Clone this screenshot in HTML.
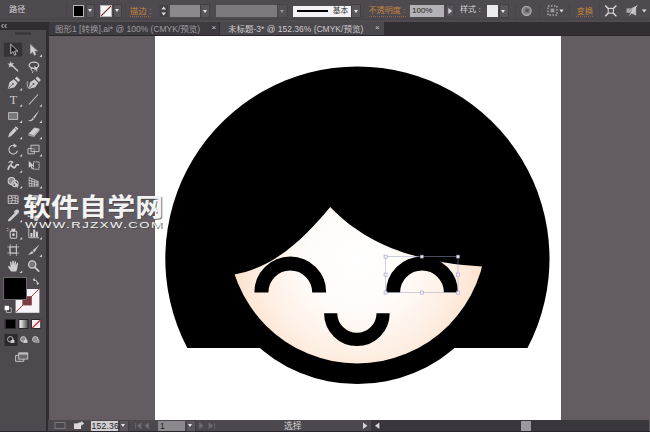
<!DOCTYPE html>
<html lang="zh"><head><meta charset="utf-8"><title>Illustrator</title>
<style>
html,body{margin:0;padding:0;background:#635d63;}
body{width:650px;height:432px;overflow:hidden;position:relative;font-family:"Liberation Sans","Noto Sans CJK SC",sans-serif;font-size:9px;line-height:1;color:#d6d4d8;}
.abs{position:absolute;}
#ctrl{left:0;top:0;width:650px;height:22px;background:#4e4a4f;}
#ctrlline{left:0;top:18px;width:650px;height:4px;background:linear-gradient(#4e4a4f,#47434a 40%,#555056 75%,#4a464c);}
#tabs{left:0;top:22px;width:650px;height:14px;background:#322e33;}
#tools{left:0;top:30px;width:47px;height:402px;background:#4e494e;}
#toolsborder{left:46.4px;top:22px;width:2.3px;height:410px;background:#302c32;}
#artboard{left:155px;top:36px;width:406px;height:384px;background:#fff;}
#status{left:48px;top:420px;width:601px;height:12px;background:#39373b;}
#statusl{left:48px;top:420px;width:323px;height:11px;background:#4c484d;}
#statusb{left:0;top:431px;width:650px;height:1px;background:#2a242e;}
.t{position:absolute;white-space:nowrap;}
.or{color:#c5853f;margin-top:1.8px;border-bottom:1px dotted rgba(197,133,63,.5);padding-bottom:0.3px;}
.box{position:absolute;box-sizing:border-box;}
.dd{position:absolute;background:#5a565c;box-shadow:0 0 0 0.6px #3c383e;}
.dd:after{content:"";position:absolute;left:50%;top:50%;margin:-1.5px 0 0 -2.5px;border:2.5px solid transparent;border-top:3px solid #e8e6ea;border-bottom:none;}
#wm1{left:23px;top:195.2px;font-size:27.5px;font-weight:700;color:#f3f3f3;transform-origin:0 0;transform:scale(1.02,0.9);text-shadow:1px 1px 0.5px rgba(70,70,70,.75);}
#wm2{left:25px;top:219.8px;font-size:9.8px;color:#f3f3f3;letter-spacing:1.1px;transform-origin:0 0;transform:scale(1.345,1);text-shadow:1px 1px 0.5px rgba(70,70,70,.75);}
</style></head>
<body>
<div class="abs" id="artboard"></div>
<svg class="abs" style="left:0;top:0" width="650" height="432" viewBox="0 0 650 432">
<defs><radialGradient id="skin" gradientUnits="userSpaceOnUse" cx="357" cy="260" r="132"><stop offset="0" stop-color="#ffffff"/><stop offset="0.4" stop-color="#fffbf8"/><stop offset="0.72" stop-color="#feefe4"/><stop offset="1" stop-color="#fcdfc9"/></radialGradient></defs>
<path d="M187.3 347.9 A192.1 192.1 0 1 1 527.5 347.9 Z" fill="#000"/>
<circle cx="357.2" cy="234.5" r="149.6" fill="#000"/>
<clipPath id="bang"><path d="M224.4 276 L234.3 274.4 C274.25 268.1 305.53 236.68 330.2 206.9 C369.89 248.58 426.03 263.43 482.1 266.5 L492.1 267.05 L492.1 400 L224.4 400 Z"/></clipPath>
<circle cx="357.2" cy="234.5" r="128.9" fill="url(#skin)" clip-path="url(#bang)"/>
<path d="M261.40000000000003 292.4 A28.9 28.9 0 0 1 319.2 292.4" fill="none" stroke="#000" stroke-width="14"/>
<path d="M393.1 292.4 A28.9 28.9 0 0 1 450.9 292.4" fill="none" stroke="#000" stroke-width="14"/>
<path d="M330.7 313.2 A26.2 26.2 0 0 0 383.09999999999997 313.2" fill="none" stroke="#000" stroke-width="13.2"/>
<rect x="385.6" y="256.6" width="72.39999999999998" height="36.0" fill="none" stroke="#9a9ec8" stroke-width="0.6" opacity="0.8"/>
<rect x="384.1" y="255.1" width="3" height="3" fill="#fff" stroke="#8d92c4" stroke-width="0.6" opacity="0.9"/>
<rect x="384.1" y="273.1" width="3" height="3" fill="#fff" stroke="#8d92c4" stroke-width="0.6" opacity="0.9"/>
<rect x="384.1" y="291.1" width="3" height="3" fill="#fff" stroke="#8d92c4" stroke-width="0.6" opacity="0.9"/>
<rect x="420.3" y="255.1" width="3" height="3" fill="#fff" stroke="#8d92c4" stroke-width="0.6" opacity="0.9"/>
<rect x="420.3" y="291.1" width="3" height="3" fill="#fff" stroke="#8d92c4" stroke-width="0.6" opacity="0.9"/>
<rect x="456.5" y="255.1" width="3" height="3" fill="#fff" stroke="#8d92c4" stroke-width="0.6" opacity="0.9"/>
<rect x="456.5" y="273.1" width="3" height="3" fill="#fff" stroke="#8d92c4" stroke-width="0.6" opacity="0.9"/>
<rect x="456.5" y="291.1" width="3" height="3" fill="#fff" stroke="#8d92c4" stroke-width="0.6" opacity="0.9"/>
</svg>
<div class="abs" id="ctrl"></div><div class="abs" id="ctrlline"></div><div class="abs" id="tabs"></div>
<div class="abs" id="tools"></div><div class="abs" id="toolsborder"></div>
<div class="abs" id="status"></div><div class="abs" id="statusl"></div><div class="abs" id="statusb"></div>
<div class="t " style="left:9.2px;top:6.4px;font-size:8px;">路径</div>
<div class="box" style="left:72.5px;top:5px;width:11.5px;height:11.5px;background:#000;border:1px solid #b8b6ba;"></div>
<div class="dd" style="left:86.5px;top:5px;width:7px;height:11.5px;"></div>
<div class="box" style="left:100px;top:5px;width:11.5px;height:11.5px;background:linear-gradient(135deg,#fbf6f6 0,#fbf6f6 44%,#7d3434 47%,#7d3434 53%,#fbf6f6 56%,#fbf6f6 100%);border:1px solid #b8b6ba;"></div>
<div class="dd" style="left:113.5px;top:5px;width:7px;height:11.5px;"></div>
<div class="t or" style="left:129.8px;top:5.5px;font-size:8.4px;">描边<span style="margin:0 0 0 2.4px">:</span></div>
<div class="box" style="left:169.5px;top:5px;width:30.5px;height:12px;background:#8b898d;"></div>
<div class="dd" style="left:201px;top:5px;width:8px;height:12px;"></div>
<div class="box" style="left:215.5px;top:5px;width:61.5px;height:12px;background:#7c7a7e;"></div>
<div class="dd" style="left:278px;top:5px;width:8.5px;height:12px;opacity:.5"></div>
<div class="box" style="left:293px;top:5.5px;width:57.5px;height:11px;background:#f4f2f6;"></div>
<div class="box" style="left:296.5px;top:10.3px;width:31px;height:1.6px;background:#000;"></div>
<div class="t " style="left:332.8px;top:7px;color:#3a3a3a;font-size:7.8px;">基本</div>
<div class="dd" style="left:352px;top:5px;width:8px;height:12px;"></div>
<div class="t or" style="left:368.5px;top:5.5px;font-size:8.1px;">不透明度<span style="margin:0 0 0 2.4px">:</span></div>
<div class="box" style="left:410px;top:5px;width:34px;height:12px;background:#b4b2b6;"></div>
<div class="t " style="left:412px;top:6.5px;color:#222;font-size:8px;">100%</div>
<div class="t " style="left:460px;top:6px;font-size:8.1px;">样式<span style="margin:0 0 0 2.4px">:</span></div>
<div class="box" style="left:487px;top:5px;width:11px;height:12px;background:#eceaee;"></div>
<div class="dd" style="left:499.5px;top:5px;width:8.5px;height:12px;"></div>
<div class="t or" style="left:576.4px;top:5.5px;font-size:8.4px;">变换</div>
<div class="box" style="left:48.5px;top:22px;width:170.5px;height:13.5px;background:#3e3b40;"></div>
<div class="t " style="left:55px;top:24.5px;color:#9e9ca0;font-size:8.5px;">图形1 [转换].ai* @ 100% (CMYK/预览)</div>
<div class="t " style="left:211.5px;top:24px;color:#d0ced2;font-size:8px;">×</div>
<div class="box" style="left:220px;top:22px;width:164px;height:14px;background:#4a484c;"></div>
<div class="t " style="left:228px;top:24.5px;color:#cccace;font-size:8.5px;">未标题-3* @ 152.36% (CMYK/预览)</div>
<div class="t " style="left:375px;top:24px;color:#d0ced2;font-size:8px;">×</div>
<div class="box" style="left:0px;top:22px;width:46.4px;height:8px;background:#302c32;"></div>
<div class="box" style="left:48.7px;top:35px;width:601.3px;height:1px;background:#29252b;"></div>
<div class="box" style="left:90.5px;top:421px;width:27.5px;height:9.5px;background:#cfcdd1;"></div>
<div class="t " style="left:91.5px;top:422px;color:#222;font-size:8.5px;letter-spacing:0.25px;">152.36</div>
<div class="dd" style="left:119.5px;top:421px;width:8.5px;height:9.5px;"></div>
<div class="box" style="left:158px;top:421px;width:27px;height:9.5px;background:#8b898d;"></div>
<div class="t " style="left:160px;top:422px;color:#222;font-size:8.5px;">1</div>
<div class="dd" style="left:187px;top:421px;width:7.5px;height:9.5px;"></div>
<div class="t " style="left:284px;top:421.5px;font-size:8.8px;">选择</div>
<div class="box" style="left:521px;top:421px;width:9.5px;height:10px;background:#9c9a9e;"></div>
<svg class="abs" style="left:0;top:0" width="650" height="22" viewBox="0 0 650 22" fill="none">
<rect x="159.5" y="5" width="8.5" height="12" fill="#444046"/><path d="M161.3 9.4 l2.4 -2.8 l2.4 2.8 z M161.3 12.6 l2.4 2.8 l2.4 -2.8 z" fill="#dad8dc"/>
<rect x="446" y="5" width="8" height="12" fill="#58545a" stroke="#3c383e" stroke-width=".6"/><path d="M448.4 8 l3.6 3 l-3.6 3 z" fill="#dad8dc"/>
<circle cx="526.6" cy="10.8" r="4.6" fill="#848286" stroke="#b4b2b6" stroke-width="1.1"/><circle cx="527.2" cy="10.4" r="1.9" fill="#59555b"/>
<rect x="548" y="6" width="9" height="9" stroke="#dad8dc" stroke-width="1" stroke-dasharray="1.5 1.5"/><rect x="550.6" y="8.6" width="3.8" height="3.8" fill="#9a989c"/><path d="M559.3 9.6 h4.4 l-2.2 2.8 z" fill="#dad8dc"/>
<rect x="608.2" y="8.4" width="5.2" height="4.8" stroke="#dad8dc" stroke-width="1.1"/><path d="M605.2 5.4 l3 3 M616.4 5.4 l-3 3 M605.2 16.2 l3 -3 M616.4 16.2 l-3 -3" stroke="#dad8dc" stroke-width="1.4"/>
<rect x="626.5" y="8.4" width="5" height="4.4" fill="#a8a6aa"/><path d="M631.5 8 l4.6 -2 v9.4 l-4.6 -2 z" fill="#bdbbbf"/><path d="M629.5 15.4 l7.6 -10" stroke="#dad8dc" stroke-width="1"/><path d="M641.8 9.6 h4.8 l-2.4 3 z" fill="#dad8dc"/>
<path d="M66.5 3 v15" stroke="#423e44" stroke-width="1" opacity=".45"/>
<path d="M125.5 3 v15" stroke="#423e44" stroke-width="1" opacity=".45"/>
<path d="M363.5 3 v15" stroke="#423e44" stroke-width="1" opacity=".45"/>
<path d="M515.5 3 v15" stroke="#423e44" stroke-width="1" opacity=".45"/>
<path d="M539.5 3 v15" stroke="#423e44" stroke-width="1" opacity=".45"/>
<path d="M569.5 3 v15" stroke="#423e44" stroke-width="1" opacity=".45"/>
<path d="M599.5 3 v15" stroke="#423e44" stroke-width="1" opacity=".45"/>
</svg>
<svg class="abs" style="left:0;top:418px" width="650" height="14" viewBox="0 418 650 14" fill="none">
<rect x="55" y="422.5" width="10" height="6" stroke="#7a787c" stroke-width="1"/>
<rect x="74" y="423.4" width="7" height="5.6" fill="#dad8dc"/><path d="M77 424 q2 -2.4 4.4 -1.6 v-1.6 l2.6 2.6 l-2.6 2.6 v-1.6 q-1.6 -.6 -3 .8" fill="#dad8dc"/>
<path d="M135.5 423 v5.6 M141 423 l-3.6 2.8 l3.6 2.8 z M148.6 423 l-3.6 2.8 l3.6 2.8 z" fill="#6f6b71" stroke="#6f6b71" stroke-width=".8"/>
<path d="M199.6 423 l3.6 2.8 l-3.6 2.8 z M209 423 l3.6 2.8 l-3.6 2.8 z M214.6 423 v5.6" fill="#6f6b71" stroke="#6f6b71" stroke-width=".8"/>
<path d="M363 422.6 l4.4 3.2 l-4.4 3.2 z" fill="#dad8dc"/><path d="M379.4 422.6 l-4.4 3.2 l4.4 3.2 z" fill="#dad8dc"/>
</svg>
<svg class="abs" style="left:0;top:0" width="50" height="432" viewBox="0 0 50 432" fill="none" stroke-linecap="round" stroke-linejoin="round">
<path d="M3.2 24.3 l-1.6 1.7 l1.6 1.7 M6.2 24.3 l-1.6 1.7 l1.6 1.7" stroke="#cfcdd1" stroke-width="1"/>
<rect x="15" y="32.5" width="16" height="2" fill="#353337"/>
<rect x="3.8" y="42.6" width="18.4" height="14" fill="#353337"/>
<g transform="translate(13.3,49.8) scale(0.86)" ><path d="M-3 -6 L-3 4.5 L-0.4 2.2 L1.4 6.3 L3.2 5.5 L1.4 1.5 L4.8 1.5 Z" fill="#1c1a1e" stroke="#cfcdd1" stroke-width="1"/></g>
<g transform="translate(33.5,49.8) scale(0.86)" ><path d="M-3.5 -6 L-3.5 4.5 L-0.9 2.2 L0.9 6.3 L2.7 5.5 L0.9 1.5 L4.3 1.5 Z" fill="#cfcdd1" stroke="#cfcdd1" stroke-width=".5"/></g>
<path d="M42.0 54.300000000000004 v2.6 h-2.6 z" fill="#cfcdd1"/>
<g transform="translate(13.3,66.5) scale(0.86)" ><path d="M-3 -6.5 L-2 -3.6 L1 -4 L-1.2 -1.8 L0 1 L-2.8 -0.4 L-5.2 1.4 L-4.6 -1.6 L-7 -3.2 L-4 -3.6 Z" fill="#cfcdd1"/><path d="M-1 -1 L5 5" stroke="#cfcdd1" stroke-width="1.6"/></g>
<g transform="translate(33.5,66.5) scale(0.86)" ><ellipse cx="0.5" cy="-1.5" rx="5.5" ry="3.6" stroke="#cfcdd1" stroke-width="1.5"/><path d="M-2 1.5 q-2 1.5 0 3 q2 1 1 2.5" stroke="#cfcdd1" stroke-width="1.1"/><path d="M1 -1 L1 5 L2.6 3.6 L3.6 6 L4.6 5.5 L3.6 3.2 L5.6 3.2 Z" fill="#cfcdd1"/></g>
<g transform="translate(13.3,83.5) scale(0.86)" ><path d="M-6.4 6.4 L-4.4 -1.4 L0.6 -5 L5 -0.6 L1.4 4.4 Z" fill="#cfcdd1"/><path d="M1.8 -5.8 L4 -8 L8 -4 L5.8 -1.8 Z" fill="#cfcdd1"/><path d="M-5.6 5.6 L-1 1" stroke="#4e494e" stroke-width=".9"/><circle cx="-0.4" cy="0.4" r="1.1" fill="#4e494e"/></g>
<path d="M22.1 88.0 v2.6 h-2.6 z" fill="#cfcdd1"/>
<g transform="translate(34.0,83.5) scale(0.86)" ><path d="M-6.4 6.4 L-4.4 -1.4 L0.6 -5 L5 -0.6 L1.4 4.4 Z" fill="#cfcdd1"/><path d="M1.8 -5.8 L4 -8 L8 -4 L5.8 -1.8 Z" fill="#cfcdd1"/><path d="M-5.6 5.6 L-1 1" stroke="#4e494e" stroke-width=".9"/><circle cx="-0.4" cy="0.4" r="1.1" fill="#4e494e"/><path d="M-7.5 -2 q-1.5 5 1.5 7.5" stroke="#cfcdd1" stroke-width="1"/></g>
<g transform="translate(13.3,99.5) scale(0.86)" ><text x="0" y="5" font-family="Liberation Serif,serif" font-size="14" fill="#cfcdd1" stroke="none" text-anchor="middle">T</text></g>
<path d="M22.1 104.2 v2.6 h-2.6 z" fill="#cfcdd1"/>
<g transform="translate(33.5,99.5) scale(0.86)" ><path d="M-5 5.5 L5 -5.5" stroke="#cfcdd1" stroke-width="1.2"/></g>
<path d="M42.0 104.2 v2.6 h-2.6 z" fill="#cfcdd1"/>
<g transform="translate(13.3,116) scale(0.86)" ><rect x="-5" y="-4" width="10" height="8" fill="#78767a" stroke="#cfcdd1" stroke-width="1"/></g>
<path d="M22.1 120.3 v2.6 h-2.6 z" fill="#cfcdd1"/>
<g transform="translate(33.5,116) scale(0.86)" ><path d="M7 -7 L-0.5 1.5 L1.2 3 Z" fill="#cfcdd1"/><path d="M-1.2 2 q-1 3.5 -5.5 3.2 q4.5 2.2 7.4 -1.6 Z" fill="#cfcdd1"/></g>
<path d="M42.0 120.3 v2.6 h-2.6 z" fill="#cfcdd1"/>
<g transform="translate(13.3,131.8) scale(0.86)" ><path d="M3 -6.5 L6 -3.5 L-2.5 5 L-6 6.5 L-4.8 2.4 Z" fill="#cfcdd1"/><path d="M1.6 -4.6 L4.2 -2" stroke="#4a484c" stroke-width=".8"/></g>
<path d="M22.1 136.7 v2.6 h-2.6 z" fill="#cfcdd1"/>
<g transform="translate(33.5,131.8) scale(0.86)" ><path d="M1 -5 L7 -3.5 L0.5 4 L-6 2.6 Z" fill="#cfcdd1"/><path d="M-6 2.6 L0.5 4 L0.5 6 L-6 4.6 Z" fill="#9c9a9e"/><path d="M0.5 4 L7 -3.5 L7 -1.6 L0.5 6 Z" fill="#bab8bc"/></g>
<path d="M42.0 136.7 v2.6 h-2.6 z" fill="#cfcdd1"/>
<g transform="translate(13.3,149.5) scale(0.86)" ><path d="M4.6 2 A5 5 0 1 1 2 -4.4" stroke="#cfcdd1" stroke-width="1.3" stroke-dasharray="3 1.2"/><path d="M0.5 -7 L4.5 -4.2 L0.5 -2 Z" fill="#cfcdd1"/></g>
<path d="M22.1 154.0 v2.6 h-2.6 z" fill="#cfcdd1"/>
<g transform="translate(33.5,149.5) scale(0.86)" ><rect x="-6" y="-1" width="7" height="6" stroke="#cfcdd1" stroke-width="1"/><rect x="-2.5" y="-5" width="9" height="7.5" stroke="#cfcdd1" stroke-width="1" fill="#66646888"/></g>
<path d="M42.0 154.0 v2.6 h-2.6 z" fill="#cfcdd1"/>
<g transform="translate(13.3,165.8) scale(0.86)" ><path d="M-6 4 q2 -7 5 -3 q2.5 3 4 -1 q1 -2 3 -1" stroke="#cfcdd1" stroke-width="2"/><path d="M-5 -4 q2.5 -2.5 4.5 0 q-3.6 1.2 -1.6 3.4" stroke="#cfcdd1" stroke-width="1.3"/></g>
<path d="M22.1 170.2 v2.6 h-2.6 z" fill="#cfcdd1"/>
<g transform="translate(33.5,165.8) scale(0.86)" ><path d="M-5.5 -6 L-5.5 2.5 L-3.4 0.6 L-2 4 L-0.6 3.4 L-2 0.2 L0.6 0.2 Z" fill="#cfcdd1"/><rect x="0" y="-4.5" width="6.5" height="8.5" stroke="#cfcdd1" stroke-width="1" stroke-dasharray="1.6 1.4"/></g>
<g transform="translate(13.3,181.8) scale(0.86)" ><circle cx="-2" cy="-1" r="4" stroke="#cfcdd1" stroke-width="1.2" fill="#8a888c"/><circle cx="2" cy="2" r="3.6" stroke="#cfcdd1" stroke-width="1.2"/><path d="M2 0 L2 6 L3.6 4.6 L4.6 7 L5.6 6.5 L4.6 4.2 L6.6 4.2 Z" fill="#cfcdd1"/></g>
<path d="M22.1 186.0 v2.6 h-2.6 z" fill="#cfcdd1"/>
<g transform="translate(33.5,181.8) scale(0.86)" ><path d="M-5 -5 L-5 5 M-2 -3.5 L-2 5 M1 -2 L1 5 M-5 -5 L6 0 M-5 -1.6 L6 1.6 M-5 1.8 L6 3.4 M-5 5 L6 5 M4 -0.8 L4 5" stroke="#cfcdd1" stroke-width=".9"/></g>
<path d="M42.0 186.0 v2.6 h-2.6 z" fill="#cfcdd1"/>
<g transform="translate(13.3,199.6) scale(0.86)" ><rect x="-5.5" y="-4.5" width="11" height="9" stroke="#cfcdd1" stroke-width="1"/><path d="M-5.5 -1 q5 -2.5 11 0 M-5.5 2 q5 -2.5 11 0 M-2 -4.5 q2 4.5 0 9 M2 -4.5 q2 4.5 0 9" stroke="#cfcdd1" stroke-width=".9"/></g>
<g transform="translate(33.5,199.6) scale(0.86)" ><rect x="-5.5" y="-4.5" width="11" height="9" stroke="#cfcdd1" stroke-width="1" fill="#8a888c"/></g>
<g transform="translate(13.3,215.6) scale(0.86)" ><path d="M3.2 -6.8 q2.2 -0.6 3.2 1 q1 1.6 -0.6 3 L4 -1 L-3.6 6.4 L-6.4 7 L-5.6 4.2 L1.8 -3.2 L0.4 -4.6 Z" fill="#cfcdd1"/></g>
<path d="M22.1 219.7 v2.6 h-2.6 z" fill="#cfcdd1"/>
<g transform="translate(33.5,215.6) scale(0.86)" ><rect x="-6" y="-5" width="6" height="6" stroke="#cfcdd1" stroke-width="1"/><circle cx="3" cy="3" r="3.2" fill="#cfcdd1"/></g>
<g transform="translate(13.3,233) scale(0.86)" ><rect x="-3.6" y="-2" width="7.6" height="8" rx="1" stroke="#cfcdd1" stroke-width="1.2"/><rect x="-2.2" y="-5" width="4.6" height="3" fill="#cfcdd1"/><circle cx="0.2" cy="2" r="1.6" fill="#cfcdd1"/><path d="M-6.5 -5.5 l.1 0 M-7 -2.6 l.1 0 M-5 -3.6 l.1 0" stroke="#cfcdd1" stroke-width="1.2"/></g>
<path d="M22.1 237.0 v2.6 h-2.6 z" fill="#cfcdd1"/>
<g transform="translate(33.5,233) scale(0.86)" ><path d="M-5.5 -5.5 L-5.5 5.5 L6 5.5" stroke="#cfcdd1" stroke-width="1"/><rect x="-3.6" y="0" width="2.4" height="4.6" fill="#cfcdd1"/><rect x="-0.4" y="-4" width="2.4" height="8.6" fill="#cfcdd1"/><rect x="2.8" y="-1.6" width="2.4" height="6.2" fill="#cfcdd1"/></g>
<path d="M42.0 237.0 v2.6 h-2.6 z" fill="#cfcdd1"/>
<g transform="translate(13.3,250) scale(0.86)" ><rect x="-3.6" y="-3.6" width="7.2" height="7.2" stroke="#cfcdd1" stroke-width="1"/><path d="M-6.5 -3.6 L6.5 -3.6 M-6.5 3.6 L6.5 3.6 M-3.6 -6.5 L-3.6 6.5 M3.6 -6.5 L3.6 6.5" stroke="#cfcdd1" stroke-width=".8"/></g>
<g transform="translate(33.5,250) scale(0.86)" ><path d="M7 -6.5 L-1 0.5 L1 2.6 Z" fill="#cfcdd1"/><path d="M-1.8 1.2 L-6.5 6 L0.4 3.4 Z" fill="#cfcdd1"/></g>
<path d="M42.0 254.29999999999998 v2.6 h-2.6 z" fill="#cfcdd1"/>
<g transform="translate(13.3,266) scale(0.86)" ><path d="M-2.6 6.5 L-5.8 1.6 q-1 -1.8 0.8 -1.8 L-3.2 1.4 L-3.8 -4.4 q0.8 -1.4 1.6 0 L-1.4 -1 L-1.2 -5.8 q0.9 -1.4 1.8 0 L0.8 -1 L1.6 -5 q1 -1.2 1.7 0.2 L2.8 -0.4 L4.2 -3.4 q1.2 -0.8 1.4 0.6 L4.6 3 q-0.4 2.4 -1.4 3.5 Z" fill="#cfcdd1"/></g>
<path d="M22.1 270.5 v2.6 h-2.6 z" fill="#cfcdd1"/>
<g transform="translate(33.5,266) scale(0.86)" ><circle cx="-1.5" cy="-1.8" r="4.2" stroke="#cfcdd1" stroke-width="1.5" fill="#77757a"/><path d="M1.6 1.6 L6 6" stroke="#cfcdd1" stroke-width="2"/></g>
<rect x="15.6" y="289" width="23.8" height="23.8" fill="#f6f4f6"/>
<path d="M16.5 311.5 L38.5 289.5" stroke="#a83838" stroke-width="1"/>
<rect x="22.4" y="296.2" width="9.4" height="9.2" fill="#7a3a42"/>
<rect x="4" y="277.5" width="22.5" height="22" fill="#000" stroke="#6a686c" stroke-width="1"/>
<path d="M34 279.8 q3.6 0 3.8 3.6" stroke="#cfcdd1" stroke-width="1"/><path d="M32.6 279.8 l2.2 -1.7 v3.4 z M37.8 285 l-1.7 -2.2 h3.4 z" fill="#cfcdd1"/>
<rect x="6.8" y="308" width="4.4" height="4.4" fill="#3a383c" stroke="#cfcdd1" stroke-width=".8"/><rect x="4.6" y="305.8" width="4.4" height="4.4" fill="#fff"/>
<defs><linearGradient id="gr" x1="0" x2="1" y1="0" y2="0"><stop offset="0" stop-color="#fff"/><stop offset="1" stop-color="#444"/></linearGradient></defs>
<rect x="5.5" y="319.5" width="10" height="9" fill="#000" stroke="#2a282c" stroke-width="1"/>
<rect x="19.2" y="319.5" width="9" height="9" fill="url(#gr)" stroke="#2a282c" stroke-width="1"/>
<rect x="31.8" y="319.5" width="9" height="9" fill="#f4f2f4" stroke="#2a282c" stroke-width="1"/><path d="M32.5 327.8 L40.2 320.2" stroke="#c23838" stroke-width="1.4"/>
<rect x="4.5" y="334" width="13" height="12" fill="#2c2a2e"/>
<g transform="translate(11,340) scale(0.86)" ><circle cx="-0.8" cy="-0.8" r="3.2" stroke="#cfcdd1" stroke-width="1" fill="none"/><rect x="-0.4" y="0" width="4.4" height="3.4" fill="#cfcdd1"/></g>
<g transform="translate(24,340) scale(0.86)" ><circle cx="-0.8" cy="-0.8" r="3.2" stroke="#cfcdd1" stroke-width="1" fill="#8a888c"/><rect x="-0.4" y="0" width="4.4" height="3.4" fill="#cfcdd1"/></g>
<g transform="translate(36,340) scale(0.86)" ><circle cx="-0.8" cy="-0.8" r="3.2" stroke="#cfcdd1" stroke-width="1" fill="#8a888c"/><rect x="-0.4" y="0" width="4.4" height="3.4" fill="#9a989c"/></g>
<g transform="translate(22,357.6) scale(0.86)" ><rect x="-7" y="-2.6" width="9" height="7" fill="#5a585c" stroke="#cfcdd1" stroke-width="1"/><rect x="-3.4" y="-5.6" width="10" height="7.4" fill="#6a686c" stroke="#cfcdd1" stroke-width="1"/><path d="M-3.4 -4.4 h10" stroke="#cfcdd1" stroke-width="1.4"/></g>
</svg>
<div class="t" id="wm1">软件自学网</div>
<div class="t" id="wm2">WWW.RJZXW.COM</div>
</body></html>
